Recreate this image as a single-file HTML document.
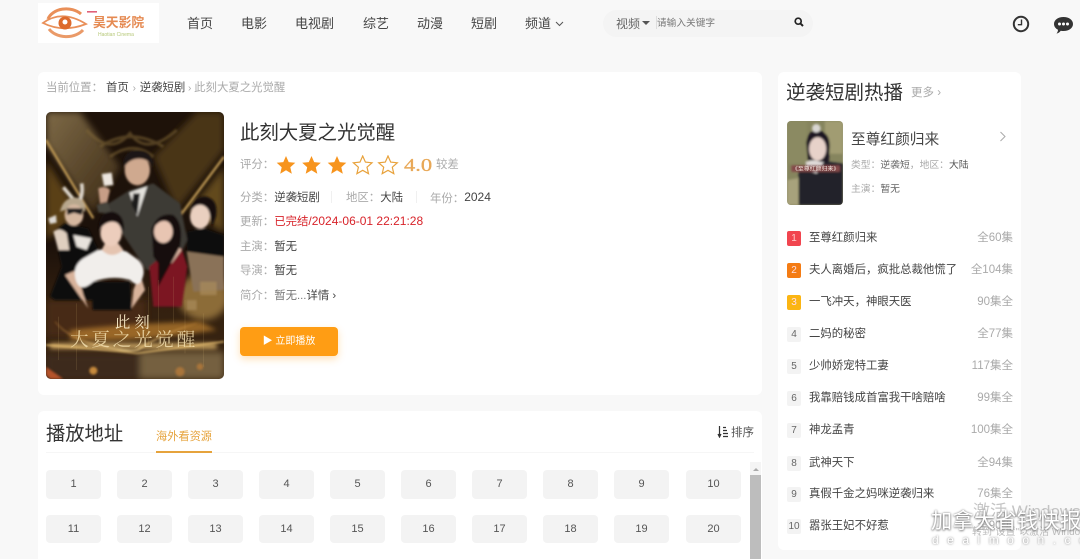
<!DOCTYPE html>
<html lang="zh"><head><meta charset="utf-8"><title>此刻大夏之光觉醒</title>
<style>
*{box-sizing:border-box;margin:0;padding:0}
html,body{width:1080px;height:559px;overflow:hidden;background:#f8f8f8}
body{position:relative;font-family:"Liberation Sans","Noto Sans CJK SC",sans-serif;color:#333;font-size:12px}
#w{position:absolute;left:0;top:0;width:1080px;height:559px;overflow:hidden;filter:blur(.3px)}
.a{position:absolute;white-space:nowrap;line-height:1}
.card{position:absolute;background:#fff;border-radius:6px}
.nav{font-size:13px;top:17px;color:#444}
.ep{position:absolute;width:55px;height:29px;background:#f3f3f3;border-radius:4px;text-align:center;font-size:11px;line-height:29px;color:#555}
.e2{top:515px;height:28px;line-height:28px}
.rk{position:absolute;left:787px;width:14px;height:15px;background:#f3f3f3;border-radius:2px;color:#666;font-size:10px;line-height:15px;text-align:center}
.t{left:809px;font-size:11.4px;color:#444}
.r{right:67px;font-size:11.5px;color:#aaa}
.l{font-size:11.4px;left:240px;color:#aaa}
.l b{font-weight:normal;color:#444}
</style></head><body><div id="w">

<div class="a" style="left:38px;top:3px;width:121px;height:40px;background:#fff"></div>
<svg class="a" style="left:38px;top:3px" width="121" height="40" viewBox="0 0 121 40">
<path d="M5 20Q24 6 48 21Q25 30 5 20Z" fill="none" stroke="#e9905a" stroke-width="1.800"/>
<path d="M10 16A19 14 0 0 1 43 11" fill="none" stroke="#e98f58" stroke-width="3"/>
<path d="M11 26A20 15 0 0 0 45 27" fill="none" stroke="#ea9a68" stroke-width="3"/>
<circle cx="27" cy="20" r="6.500" fill="#dd6a2c"/><circle cx="27" cy="19" r="2.500" fill="#fff"/>
<rect x="49" y="8" width="10" height="1.600" fill="#e0607a"/>
<text x="55" y="24" font-size="12.800" fill="#e58a52" font-weight="bold" font-family="Liberation Sans,Noto Sans CJK SC,sans-serif">昊天影院</text>
<text x="60" y="33" font-size="5" fill="#b6c878" font-family="Liberation Sans,sans-serif">Haotian Cinema</text>
</svg>

<div class="a nav" style="left:187px">首页</div>
<div class="a nav" style="left:241px">电影</div>
<div class="a nav" style="left:295px">电视剧</div>
<div class="a nav" style="left:363px">综艺</div>
<div class="a nav" style="left:417px">动漫</div>
<div class="a nav" style="left:471px">短剧</div>
<div class="a nav" style="left:525px">频道</div>
<svg class="a" style="left:555px;top:21px" width="9" height="6"><path d="M1 1L4.500 4.500L8 1" fill="none" stroke="#555" stroke-width="1"/></svg>

<div class="a" style="left:603px;top:10px;width:210px;height:27px;border-radius:14px;background:#f4f4f4"></div>
<div class="a" style="left:616px;top:18px;font-size:12px;color:#666">视频</div>
<div class="a" style="left:642px;top:21px;width:0;height:0;border:4px solid transparent;border-top:4px solid #555"></div>
<div class="a" style="left:656px;top:16px;width:1px;height:13px;background:#ddd"></div>
<div class="a" style="left:657px;top:19px;font-size:9.700px;color:#777">请输入关键字</div>
<svg class="a" style="left:794px;top:17px" width="10" height="10"><circle cx="4.200" cy="4.200" r="3" fill="none" stroke="#222" stroke-width="1.700"/><path d="M6.400 6.400L9 9" stroke="#222" stroke-width="2"/></svg>

<svg class="a" style="left:1012px;top:15px" width="18" height="18"><circle cx="9" cy="9" r="7.200" fill="none" stroke="#333" stroke-width="2"/><path d="M9.500 4.500V9.700H5.800" fill="none" stroke="#333" stroke-width="1.400"/></svg>
<svg class="a" style="left:1053px;top:15px" width="21" height="20"><path d="M10.500 2C16 2 20 5 20 9S16 16 10.500 16C9.500 16 8.600 16 7.800 15.700C6.800 17 5.600 18 3.500 18.600C4.600 17.300 5 16 5 14.800C2.600 13.500 1 11.500 1 9C1 5 5 2 10.500 2Z" fill="#333"/><circle cx="6.500" cy="9" r="1.500" fill="#fff"/><circle cx="10.500" cy="9" r="1.500" fill="#fff"/><circle cx="14.500" cy="9" r="1.500" fill="#fff"/></svg>

<!-- main card -->
<div class="card" style="left:38px;top:72px;width:724px;height:323px"></div>
<div class="a" style="left:46px;top:83px;font-size:11.400px;color:#aaa">当前位置：</div>
<div class="a" style="left:106px;top:83px;font-size:11.400px;color:#444">首页<span style="color:#aaa;padding:0 1px;font-size:10px"> › </span>逆袭短剧<span style="color:#aaa;font-size:10px"> › </span><span style="color:#aaa">此刻大夏之光觉醒</span></div>

<svg class="a" style="left:46px;top:112px;border-radius:5px" width="178" height="267" viewBox="48 36 534 801">
<defs>
<linearGradient id="bg" x1="0" y1="0" x2="0" y2="1"><stop offset="0" stop-color="#1e1209"/><stop offset=".5" stop-color="#1c110a"/><stop offset=".72" stop-color="#33200f"/><stop offset="1" stop-color="#3a2613"/></linearGradient>
<linearGradient id="vl" x1="0" y1="0" x2="1" y2="1"><stop offset="0" stop-color="#7e6a47"/><stop offset="1" stop-color="#3a2813"/></linearGradient>
<linearGradient id="sw" x1="0" y1="0" x2="1" y2="0"><stop offset="0" stop-color="#c98a38" stop-opacity=".3"/><stop offset=".5" stop-color="#ffe19a"/><stop offset="1" stop-color="#c98a38" stop-opacity=".3"/></linearGradient>
<filter id="b1" x="-5%" y="-5%" width="110%" height="110%"><feGaussianBlur stdDeviation="3"/></filter>
<filter id="b2" x="-10%" y="-10%" width="120%" height="120%"><feGaussianBlur stdDeviation="10"/></filter>
<filter id="b4" x="-20%" y="-50%" width="140%" height="200%"><feGaussianBlur stdDeviation="7"/></filter>
</defs>
<rect x="48" y="36" width="534" height="801" fill="url(#bg)"/>
<g filter="url(#b2)">
<path d="M48 36H150L270 200L190 340L48 130Z" fill="url(#vl)"/>
<path d="M582 36H500L370 170L440 330L582 150Z" fill="#4a3518"/>
<path d="M48 180L150 340L48 420Z" fill="#5a4119"/>
<path d="M582 200L480 330L582 400Z" fill="#62491f"/>
<ellipse cx="520" cy="590" rx="75" ry="70" fill="#8c6c38"/>
<rect x="48" y="600" width="300" height="110" fill="#472a12"/>
<rect x="330" y="755" width="252" height="82" fill="#75603f"/>
<rect x="48" y="760" width="282" height="77" fill="#3c2a1a"/>
</g>
<g filter="url(#b1)">
<path d="M170 90Q240 170 300 100Q350 170 440 90M210 140Q300 80 400 140M240 170Q310 120 370 170" stroke="#7d6533" stroke-width="9" fill="none" opacity=".55"/>
<path d="M48 120L190 355" stroke="#c09a55" stroke-width="7"/>
<path d="M582 170L452 345" stroke="#c09a55" stroke-width="7"/>
<!-- right woman -->
<path d="M470 395L520 385L582 405V470L470 460Z" fill="#0c0a0a"/>
<path d="M470 455L582 470V570L490 575Z" fill="#8a7258"/>
<path d="M478 335Q490 285 530 290Q566 300 558 350L545 385Q545 335 520 318Q495 315 478 335Z" fill="#17100e"/>
<ellipse cx="510" cy="350" rx="30" ry="36" fill="#ead0c0"/>
<!-- man -->
<path d="M205 330L300 270L370 250L450 310L472 420L430 510H350L240 345Z" fill="#3d3b36"/>
<path d="M298 278L352 258L322 350Z" fill="#e4e2dd"/><path d="M310 280H330L322 345L305 315Z" fill="#1c1c1e"/>
<ellipse cx="322" cy="210" rx="38" ry="46" fill="#cfa98f"/>
<path d="M280 205Q275 150 325 150Q375 152 370 205Q358 175 325 176Q295 178 280 205Z" fill="#1f1713"/>
<path d="M215 222L245 218L250 255L222 258Z" fill="#ede6de"/>
<path d="M205 265Q225 255 240 270L232 305L210 310Z" fill="#c79e87"/>
<path d="M200 315L232 305L245 340L205 338Z" fill="#47443e"/>
<!-- bunny -->
<path d="M72 395L105 370L175 385L205 450L190 600H75L60 590L95 500Z" fill="#100c0b"/>
<path d="M100 262L130 298M155 250Q160 285 148 302" stroke="#ddd6cb" stroke-width="11" fill="none"/>
<path d="M90 335Q100 290 140 293Q170 300 165 335L120 325Z" fill="#b8a78d"/>
<ellipse cx="132" cy="345" rx="28" ry="32" fill="#d5b8a0"/>
<path d="M110 325H160L155 345L132 338L112 345Z" fill="#1a1a1c"/>
<path d="M70 395Q90 380 110 400L118 450L85 450Z" fill="#dfcfbf"/>
<path d="M130 405L185 415L170 450L140 440Z" fill="#e7e2dc"/>
<path d="M55 355L78 345L80 368L60 372Z" fill="#dedad4"/>
<!-- red woman -->
<path d="M358 500L395 470L455 445L472 500L455 620H370Z" fill="#7b1220"/>
<path d="M385 440H445L455 450L425 490L395 480Z" fill="#dcb8a4"/>
<path d="M365 385Q385 335 430 345Q462 370 450 440L385 560L385 490L370 470Z" fill="#120c0d"/>
<ellipse cx="400" cy="395" rx="28" ry="34" fill="#e8c5b2"/>
<path d="M378 375Q400 350 432 375L425 355L390 350Z" fill="#120c0d"/>
<!-- white dress -->
<path d="M105 525L150 590L175 625L160 585L140 510Z" fill="#d8b39b"/>
<path d="M310 570L330 520L345 570L305 625Z" fill="#d8b39b"/>
<path d="M185 545H300L305 630H188Z" fill="#0a0808"/>
<path d="M205 450Q245 440 290 455L325 480Q345 500 340 525Q330 570 300 540Q245 525 190 545Q145 585 135 530Q130 495 160 475Z" fill="#f1eeeb"/>
<path d="M215 450Q245 480 280 450L265 430H225Z" fill="#e5c4b0"/>
<ellipse cx="243" cy="400" rx="32" ry="38" fill="#eccdbc"/>
<path d="M205 395Q205 335 245 335Q285 340 282 395Q270 365 245 365Q220 368 205 395Z" fill="#17100e"/>
</g>
<!-- bottom gold -->
<g filter="url(#b4)">
<path d="M120 690Q300 670 510 665L560 690Q300 730 120 720Z" fill="#b67b2c" opacity=".75"/>
<rect x="60" y="730" width="500" height="16" fill="#f2c878" opacity=".8"/>
</g>
<g filter="url(#b1)">
<path d="M75 665Q120 720 220 740T330 745Q400 700 500 670" stroke="url(#sw)" stroke-width="5" fill="none"/>
<path d="M48 735Q190 745 320 760L582 725" stroke="#f0c674" stroke-width="4" fill="none"/>
<path d="M48 800L100 837H60L48 825Z" fill="#b5522a"/>
<circle cx="190" cy="812" r="12" fill="#c78a3c"/><circle cx="450" cy="815" r="14" fill="#a8743a"/><circle cx="510" cy="800" r="10" fill="#a8743a"/>
<path d="M510 545h50v40h-50zM470 600h30v30h-30z" fill="#a98c5c" opacity=".7"/>
</g>
<path d="M85 650V780M140 610V810M355 560V740M385 540V750M430 530V670M520 640V800M465 600V760" stroke="#d9b878" stroke-width="1.200" opacity=".35"/>
<text x="255" y="682" font-size="46" letter-spacing="12" fill="#f6e8c4" font-family="Noto Serif CJK SC,serif">此刻</text>
<text x="120" y="738" font-size="56" letter-spacing="8" fill="#f3dfae" font-family="Noto Serif CJK SC,serif" opacity=".85">大夏之光觉醒</text>
</svg>

<div class="a" style="left:240px;top:124px;font-size:19.400px;color:#333">此刻大夏之光觉醒</div>
<div class="a l" style="top:160px">评分：</div>
<svg class="a" style="left:276px;top:155px" width="126" height="20" viewBox="0 0 126 20">
<defs><path id="s" d="M10 1L12.700 7.100L19.300 7.800L14.300 12.200L15.800 18.700L10 15.300L4.200 18.700L5.700 12.200L0.700 7.800L7.300 7.100Z"/></defs>
<use href="#s" fill="#f7941d"/><use href="#s" x="25.500" fill="#f7941d"/><use href="#s" x="51" fill="#f7941d"/>
<use href="#s" x="76.700" fill="#fff" stroke="#e8a23c" stroke-width="1.200"/>
<use href="#s" x="102" fill="#fff" stroke="#e8a23c" stroke-width="1.200"/>
</svg>
<div class="a" style="left:404px;top:156px;font-size:18px;color:#e8a857;font-family:'Liberation Serif',serif;transform:scaleX(1.250);transform-origin:left top;-webkit-text-stroke:.3px #e8a857">4.0</div>
<div class="a" style="left:436px;top:160px;font-size:11.400px;color:#aaa">较差</div>

<div class="a l" style="top:193px">分类：<b>逆袭短剧</b></div>
<div class="a" style="left:331px;top:191px;height:12px;border-left:1px solid #f0f0f0"></div>
<div class="a l" style="left:346px;top:193px">地区：<b>大陆</b></div>
<div class="a" style="left:416px;top:191px;height:12px;border-left:1px solid #f0f0f0"></div>
<div class="a l" style="left:430px;top:191px"><span style="position:relative;top:1px">年份：</span><b style="font-size:12px">2024</b></div>
<div class="a l" style="top:215px">更新：<span style="color:#d8232a">已完结<span style="font-size:12px">/2024-06-01 22:21:28</span></span></div>
<div class="a l" style="top:242px">主演：<b>暂无</b></div>
<div class="a l" style="top:266px">导演：<b>暂无</b></div>
<div class="a l" style="top:291px">简介：<span style="color:#777">暂无...</span><b>详情 ›</b></div>

<div class="a" style="left:240px;top:327px;width:98px;height:29px;background:#ff9d14;border-radius:4px;box-shadow:0 3px 8px rgba(255,157,20,.3);color:#fff;font-size:10px;line-height:29px;text-align:center">▶ 立即播放</div>

<!-- play card -->
<div class="card" style="left:38px;top:411px;width:724px;height:160px"></div>
<div class="a" style="left:46px;top:425px;font-size:19.300px;color:#333">播放地址</div>
<div class="a" style="left:156px;top:432px;font-size:11.200px;color:#e6a33c">海外看资源</div>
<div class="a" style="left:46px;top:452px;width:708px;height:1px;background:#f6f6f6"></div>
<div class="a" style="left:156px;top:451px;width:56px;height:2px;background:#e6a33c"></div>
<svg class="a" style="left:717px;top:426px" width="12" height="12"><path d="M2.500 0V10M1 8L2.500 11L4 8" stroke="#333" stroke-width="1.200" fill="#333"/><path d="M6 1.500H9M6 4.500H10M6 7.500H11M6 10.500H11" stroke="#333" stroke-width="1.200"/></svg>
<div class="a" style="left:731px;top:428px;font-size:11.500px;color:#555">排序</div>

<div class="ep" style="left:46px;top:470px">1</div><div class="ep" style="left:117px;top:470px">2</div><div class="ep" style="left:188px;top:470px">3</div><div class="ep" style="left:259px;top:470px">4</div><div class="ep" style="left:330px;top:470px">5</div><div class="ep" style="left:401px;top:470px">6</div><div class="ep" style="left:472px;top:470px">7</div><div class="ep" style="left:543px;top:470px">8</div><div class="ep" style="left:614px;top:470px">9</div><div class="ep" style="left:686px;top:470px">10</div>
<div class="ep e2" style="left:46px">11</div><div class="ep e2" style="left:117px">12</div><div class="ep e2" style="left:188px">13</div><div class="ep e2" style="left:259px">14</div><div class="ep e2" style="left:330px">15</div><div class="ep e2" style="left:401px">16</div><div class="ep e2" style="left:472px">17</div><div class="ep e2" style="left:543px">18</div><div class="ep e2" style="left:614px">19</div><div class="ep e2" style="left:686px">20</div>

<div class="a" style="left:750px;top:462px;width:11px;height:97px;background:#f4f4f4"></div>
<div class="a" style="left:753px;top:468px;width:0;height:0;border:3px solid transparent;border-bottom:3px solid #aaa;border-top:0"></div>
<div class="a" style="left:750px;top:475px;width:11px;height:84px;background:#bdbdbd"></div>

<!-- sidebar -->
<div class="card" style="left:778px;top:72px;width:243px;height:478px"></div>
<div class="a" style="left:786px;top:84px;font-size:19.500px;color:#333">逆袭短剧热播</div>
<div class="a" style="left:911px;top:88px;font-size:11.500px;color:#aaa">更多 ›</div>
<svg class="a" style="left:787px;top:121px;border-radius:4px" width="56" height="84" viewBox="35 150 170 256">
<defs><filter id="b3" x="-5%" y="-5%" width="110%" height="110%"><feGaussianBlur stdDeviation="3"/></filter></defs>
<rect x="35" y="150" width="170" height="256" fill="#86855e"/>
<g filter="url(#b3)">
<rect x="35" y="150" width="60" height="130" fill="#8b8a62"/>
<rect x="150" y="150" width="55" height="100" fill="#a19c72"/>
<path d="M35 330L90 320L80 406H35Z" fill="#a7a27c"/>
<path d="M70 300L130 270L205 280V406H70Z" fill="#22232b"/>
<path d="M92 275L125 265L150 270L125 310L95 300Z" fill="#e1dcda"/>
<path d="M93 215Q100 175 130 178Q165 185 165 225L162 275H140L120 270L98 270Z" fill="#1a1820"/>
<ellipse cx="128" cy="235" rx="26" ry="36" fill="#e7d2c9"/>
<circle cx="124" cy="172" r="13" fill="#d8d6d2"/>
<rect x="48" y="285" width="148" height="20" fill="#84494a"/>
</g>
<text x="50" y="301" font-size="17" fill="#f2e6e0" font-family="Noto Sans CJK SC,sans-serif" textLength="144" lengthAdjust="spacingAndGlyphs">《至尊红颜归来》</text>
</svg>
<div class="a" style="left:851px;top:133px;font-size:14.700px;color:#444">至尊红颜归来</div>
<svg class="a" style="left:999px;top:131px" width="8" height="11"><path d="M1.500 1L6 5.500L1.500 10" fill="none" stroke="#aaa" stroke-width="1"/></svg>
<div class="a" style="left:851px;top:161px;font-size:9.800px;color:#aaa">类型：<span style="color:#666">逆袭短</span>，地区：<span style="color:#555">大陆</span></div>
<div class="a" style="left:851px;top:185px;font-size:9.800px;color:#aaa">主演：<span style="color:#666">暂无</span></div>

<div class="rk" style="top:231px;background:#f1454f;color:#fcc">1</div><div class="a t" style="top:233px">至尊红颜归来</div><div class="a r" style="top:233px">全60集</div>
<div class="rk" style="top:263px;background:#f47c14;color:#fdd">2</div><div class="a t" style="top:265px">夫人离婚后，疯批总裁他慌了</div><div class="a r" style="top:265px">全104集</div>
<div class="rk" style="top:295px;background:#fbb513;color:#fde">3</div><div class="a t" style="top:297px">一飞冲天，神眼天医</div><div class="a r" style="top:297px">90集全</div>
<div class="rk" style="top:327px">4</div><div class="a t" style="top:329px">二妈的秘密</div><div class="a r" style="top:329px">全77集</div>
<div class="rk" style="top:359px">5</div><div class="a t" style="top:361px">少帅娇宠特工妻</div><div class="a r" style="top:361px">117集全</div>
<div class="rk" style="top:391px">6</div><div class="a t" style="top:393px">我靠赔钱成首富我干啥赔啥</div><div class="a r" style="top:393px">99集全</div>
<div class="rk" style="top:423px">7</div><div class="a t" style="top:425px">神龙孟青</div><div class="a r" style="top:425px">100集全</div>
<div class="rk" style="top:456px">8</div><div class="a t" style="top:458px">武神天下</div><div class="a r" style="top:458px">全94集</div>
<div class="rk" style="top:487px">9</div><div class="a t" style="top:489px">真假千金之妈咪逆袭归来</div><div class="a r" style="top:489px">76集全</div>
<div class="rk" style="top:519px">10</div><div class="a t" style="top:521px">嚣张王妃不好惹</div><div class="a r" style="top:521px">全90集</div>

<!-- watermarks -->
<div class="a" style="left:973px;top:503px;font-size:17px;color:#c4c4c4">激活 Windows</div>
<div class="a" style="left:972px;top:528px;font-size:10px;color:#bbb">转到"设置"以激活 Windows。</div>
<div class="a" style="left:931px;top:511px;font-size:21px;letter-spacing:.5px;color:#fff;text-shadow:0 0 2px #888,0 1px 2px #777">加拿大省钱快报</div>
<div class="a" style="left:932px;top:534px;font-size:12px;letter-spacing:8.500px;color:#fff;text-shadow:0 0 2px #777">dealmoon.com</div>
</div></body></html>
